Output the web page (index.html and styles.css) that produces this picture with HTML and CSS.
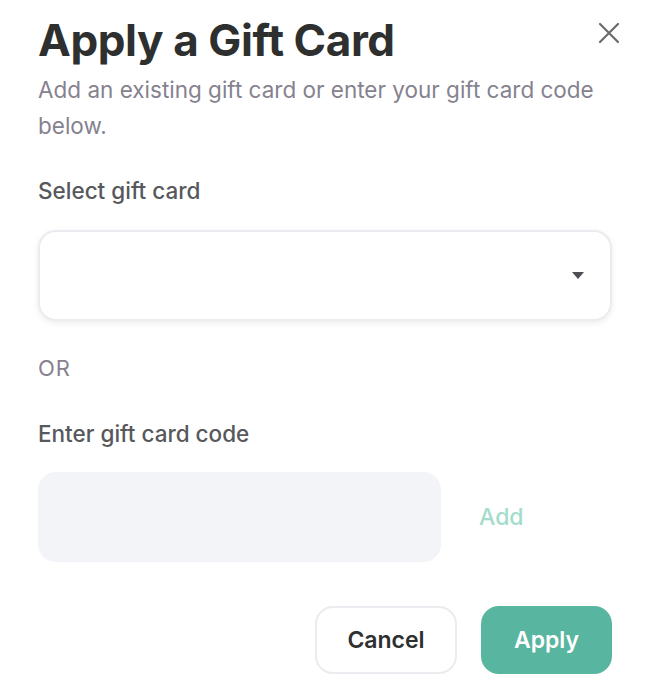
FILE: index.html
```html
<!DOCTYPE html>
<html lang="en">
<head>
    <meta charset="UTF-8">
    <meta name="viewport" content="width=device-width, initial-scale=1.0">
    <title>Apply a Gift Card</title>
    <link rel="stylesheet" href="styles.css">
</head>
<body>
    <div class="modal">
        <div class="modal-header">
            <h1>Apply a Gift Card</h1>
            <button class="close-btn" aria-label="Close">
                <svg width="22" height="22" viewBox="0 0 22 22">
                    <path d="M2 2 L20 20 M20 2 L2 20" stroke="#6b6b6b" stroke-width="2.2" stroke-linecap="round"/>
                </svg>
            </button>
        </div>
        <p class="subtitle">Add an existing gift card or enter your gift card code below.</p>

        <label class="field-label">Select gift card</label>
        <div class="select-box">
            <svg width="12" height="7" viewBox="0 0 12 7">
                <path d="M0 0 H12 L6 7 Z" fill="#4d4d52"/>
            </svg>
        </div>

        <p class="or">OR</p>

        <label class="field-label">Enter gift card code</label>
        <div class="code-row">
            <div class="code-input"></div>
            <span class="add-link">Add</span>
        </div>

        <div class="actions">
            <button class="btn btn-cancel">Cancel</button>
            <button class="btn btn-apply">Apply</button>
        </div>
    </div>
</body>
</html>
```

FILE: styles.css
```css
body {
    margin: 0;
    background: #ffffff;
    font-family: Inter, 'Noto Sans', sans-serif;
}
.modal {
    padding: 14px 36px 0 38px;
}
.modal-header {
    display: flex;
    justify-content: space-between;
    align-items: flex-start;
}
h1 {
    margin: 0;
    font-size: 44px;
    font-weight: 700;
    color: #2e3030;
    letter-spacing: -0.4px;
    line-height: 52px;
}
.close-btn {
    background: none;
    border: none;
    padding: 0;
    margin: 8px -8px 0 0;
    cursor: pointer;
}
.subtitle {
    margin: 6px 0 0;
    font-size: 22.5px;
    line-height: 36px;
    color: #85828f;
}
.field-label {
    display: block;
    margin-top: 33px;
    font-size: 22.5px;
    font-weight: 500;
    color: #57585c;
}
.select-box {
    margin-top: 26px;
    height: 87px;
    border: 2px solid #ebebf0;
    border-radius: 18px;
    box-shadow: 0 2px 6px rgba(0, 0, 0, 0.08);
    display: flex;
    align-items: center;
    justify-content: flex-end;
    padding-right: 26px;
}
.or {
    margin: 34px 0 0;
    padding-bottom: 6px;
    font-size: 22px;
    letter-spacing: 1px;
    color: #85828f;
}
.code-row {
    margin-top: 25px;
    display: flex;
    align-items: center;
}
.code-input {
    width: 403px;
    height: 90px;
    background: #f3f4f8;
    border-radius: 18px;
}
.add-link {
    margin-left: 38px;
    font-size: 23px;
    font-weight: 500;
    color: #a4dccc;
}
.actions {
    margin-top: 44px;
    display: flex;
    justify-content: flex-end;
    gap: 24px;
}
.btn {
    height: 68px;
    border-radius: 18px;
    font-family: inherit;
    font-size: 23px;
    font-weight: 600;
    cursor: pointer;
}
.btn-cancel {
    width: 142px;
    background: #ffffff;
    border: 2px solid #ebebf0;
    color: #2e3030;
}
.btn-apply {
    width: 131px;
    background: #58b5a0;
    border: none;
    color: #ffffff;
}
```
